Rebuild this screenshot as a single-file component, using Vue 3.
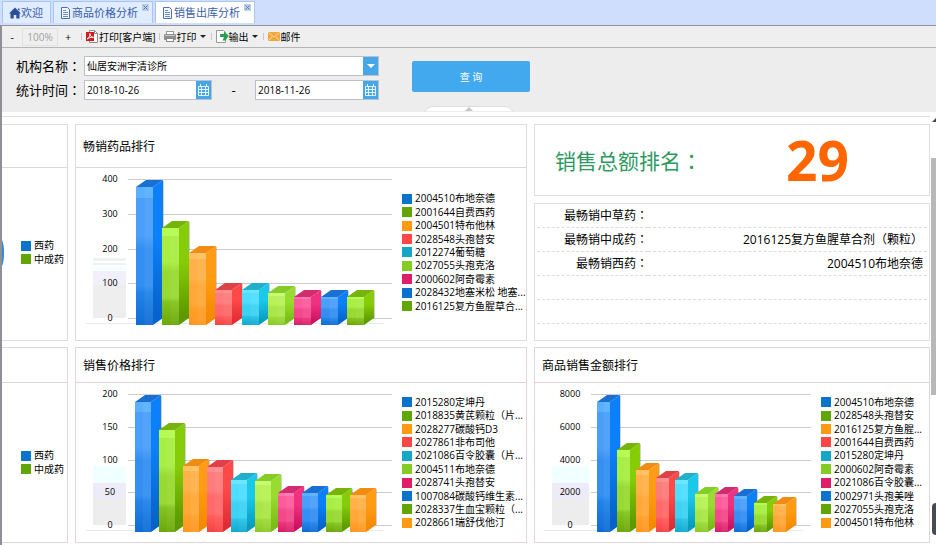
<template>
  <div class="page">
    <nav class="tabs">
      <a href="#" class="tab">
        <svg class="tab-icon" viewBox="0 0 12 12">
          <path d="M6 0.5 L12 6.5 H10.5 V11.5 H7.3 V8 H4.7 V11.5 H1.5 V6.5 H0 Z" fill="#2a4f9c" />
          <path d="M9 1.5 h1.5 v2.5 l-1.5 -1.5z" fill="#2a4f9c" />
        </svg>
        <span>欢迎</span>
      </a>
      <a v-for="tab in tabs" :key="tab.name" href="#" :class="['tab', 'closable', { active: tab.active }]">
        <svg class="tab-icon" viewBox="0 0 12 12">
          <path d="M1.5 0.5 h6 l2 2 v9 h-8z" fill="#f4f8ff" stroke="#4a6fb5" />
          <path d="M3 3.5 h3 M3 5.5 h5 M3 7.5 h5 M3 9.5 h5" stroke="#6a8cc8" />
        </svg>
        <span>{{ tab.name }}</span>
        <svg class="tab-close" viewBox="0 0 7 7">
          <rect width="7" height="7" rx="1" fill="#b9cdea" />
          <path d="M1.5 1.5 l4 4 M5.5 1.5 l-4 4" stroke="#5f7ba8" />
        </svg>
      </a>
    </nav>

    <div class="workspace">
      <div class="toolbar">
        <button class="tool zoom-btn">-</button>
        <input class="zoom-value" type="text" :value="zoom" aria-label="缩放" readonly />
        <button class="tool zoom-btn">+</button>
        <i class="sep"></i>
        <button class="tool">
          <svg class="tool-icon" viewBox="0 0 13 13">
            <path d="M3.5 0.5 h5 l3 3 v9 h-8z" fill="#fff" stroke="#8c8c8c" />
            <path d="M8.5 0.5 v3 h3" fill="none" stroke="#8c8c8c" />
            <rect x="0" y="2" width="8" height="9" fill="#cf1b22" />
            <path d="M1 9 C3.5 8 4.500 5 3.800 3.500 C4 6 5.500 7.500 7.500 7.300 C4.500 7 2.500 8 1 9" fill="none" stroke="#fff" />
          </svg>
          <span>打印[客户端]</span>
        </button>
        <i class="sep"></i>
        <button class="tool">
          <svg class="tool-icon" viewBox="0 0 13 13">
            <rect x="2.5" y="1.5" width="7" height="4" fill="#fff" stroke="#9a9a9a" />
            <rect x="0" y="4" width="12" height="6" rx="1" fill="#8d8f91" />
            <rect x="1" y="5" width="10" height="1" fill="#c5c7c9" />
            <rect x="2.5" y="8.5" width="7" height="3" fill="#fff" stroke="#888" />
          </svg>
          <span>打印</span>
          <i class="caret"></i>
        </button>
        <i class="sep"></i>
        <button class="tool">
          <svg class="tool-icon" viewBox="0 0 13 13">
            <path d="M0.5 0.5 h7 l2 2 v10 h-9z" fill="#fff" stroke="#999" />
            <path d="M4 4 H8 V1.5 L12.500 5.500 V6 L9.500 10.500 H6.500 L8 7 H4z" fill="#25a250" />
          </svg>
          <span>输出</span>
          <i class="caret"></i>
        </button>
        <i class="sep"></i>
        <button class="tool">
          <svg class="tool-icon" viewBox="0 0 13 13">
            <rect x="0" y="2" width="12" height="9" rx="1" fill="#f2a63c" />
            <path d="M0.500 2.500 L6 7 L11.500 2.500 M0.500 10.500 L4.500 6.500 M11.500 10.500 L7.500 6.500" fill="none" stroke="#fbdca4" />
          </svg>
          <span>邮件</span>
        </button>
      </div>

      <form class="query" @submit.prevent>
        <div class="fields">
          <div class="field-row">
            <label for="org">机构名称<span class="colon">：</span></label>
            <div class="box org-box">
              <select id="org" v-model="org">
                <option>仙居安洲宇清诊所</option>
              </select>
              <span class="box-btn"><i class="caret white"></i></span>
            </div>
          </div>
          <div class="field-row">
            <label for="start">统计时间<span class="colon">：</span></label>
            <div class="box date-box">
              <input id="start" v-model="startDate" type="text" />
              <button type="button" class="box-btn" aria-label="选择开始日期">
                <svg class="calendar" viewBox="0 0 11 12">
                  <path d="M0.500 2.500 h10 v9 h-10z M0.500 5.500 h10 M0.500 8.500 h10 M3.500 3 v8 M7.500 3 v8 M2.500 0 v3 M8.500 0 v3" fill="none" stroke="#e4f3ff" />
                </svg>
              </button>
            </div>
            <span class="dash">-</span>
            <div class="box end-box">
              <input id="end" v-model="endDate" type="text" aria-label="结束日期" />
              <button type="button" class="box-btn" aria-label="选择结束日期">
                <svg class="calendar" viewBox="0 0 11 12">
                  <path d="M0.500 2.500 h10 v9 h-10z M0.500 5.500 h10 M0.500 8.500 h10 M3.500 3 v8 M7.500 3 v8 M2.500 0 v3 M8.500 0 v3" fill="none" stroke="#e4f3ff" />
                </svg>
              </button>
            </div>
          </div>
        </div>
        <button class="submit">查 询</button>
        <svg class="handle" viewBox="0 0 90 6">
          <path d="M0 6 L5 1.500 Q7 0.500 10 0.500 H80 Q83 0.500 85 1.500 L90 6z" fill="#fff" stroke="#ddd" />
          <path d="M41 5 L45 1 L49 5z" fill="#c4c4c4" />
        </svg>
      </form>

      <div class="content">
        <main class="report">
          <div class="prev-row"></div>
          <div class="dashboard">
            <template v-for="row in rows" :key="row.key">
              <section :class="['panel', 'cut', row.key]">
                <h2></h2>
                <div class="panel-body pie-body">
                  <svg v-if="row.key === 'top'" class="pie" viewBox="0 0 2 26">
                    <path d="M0 0 Q2 4 2 13 Q2 22 0 26z" fill="#2a8ad8" />
                  </svg>
                  <ul class="legend" :style="{ height: legendHeight(2) }">
                    <li v-for="(name, i) in ['西药', '中成药']" :key="name">
                      <i :class="['swatch', palette[i].name]"></i>{{ name }}
                    </li>
                  </ul>
                </div>
              </section>

              <template v-for="chart in row.charts" :key="chart.title">
                <div v-if="chart.summary" class="stack">
                  <section class="panel total">
                    <span class="total-label">销售总额排名<span class="colon">：</span></span>
                    <strong>29</strong>
                  </section>
                  <section class="panel best">
                    <table>
                      <tbody>
                        <tr v-for="(item, i) in best" :key="i">
                          <th scope="row">{{ item[0] }}<span v-if="item[0]" class="colon">：</span></th>
                          <td>{{ item[1] }}</td>
                        </tr>
                      </tbody>
                    </table>
                  </section>
                </div>
                <section v-else :class="['panel', row.key]">
                  <h2>{{ chart.title }}</h2>
                  <div class="panel-body">
                    <svg :width="chart.right + 10" :height="chart.zero + 17" class="chart">
                      <defs>
                        <template v-for="c in palette" :key="c.name">
                          <linearGradient :id="`${chart.id}-${c.name}`" x2="0" y2="1">
                            <stop v-for="(s, i) in steps" :key="i" :offset="s[0]" :stop-color="c.front[s[1]]" />
                          </linearGradient>
                          <linearGradient :id="`${chart.id}-${c.name}-side`" x2="0" y2="1">
                            <stop offset="0" :stop-color="c.side[0]" />
                            <stop offset="0.4" :stop-color="c.side[0]" />
                            <stop offset="0.9" :stop-color="c.side[1]" />
                          </linearGradient>
                        </template>
                      </defs>
                      <rect
                        v-for="(w, i) in row.wall"
                        :key="i"
                        x="17"
                        :y="w[0]"
                        :width="chart.left - 19"
                        :height="w[1]"
                        :fill="w[2]"
                      />
                      <line :x1="chart.floor" :x2="chart.right - 8" :y1="chart.zero + 5.5" :y2="chart.zero + 5.5" stroke="#e6ecec" />
                      <g v-for="(tick, i) in chart.ticks" :key="tick">
                        <line :x1="chart.left" :x2="chart.right" :y1="tickY(chart, i)" :y2="tickY(chart, i)" stroke="#ccc" />
                        <text :x="chart.label" :y="tickY(chart, i) + 2" text-anchor="middle">{{ tick }}</text>
                      </g>
                      <g v-for="bar in bars(chart)" :key="bar.x">
                        <path :d="bar.shadow" fill="#000" fill-opacity="0.18" />
                        <path :d="bar.side" :fill="`url(#${chart.id}-${bar.color.name}-side)`" />
                        <path :d="bar.top" :fill="bar.color.top" />
                        <rect :x="bar.x" :y="bar.y" :width="chart.bar" :height="bar.h" :fill="`url(#${chart.id}-${bar.color.name})`" />
                        <rect :x="bar.x + chart.bar / 2" :y="bar.y" :width="chart.bar / 2" :height="bar.h" fill="#fff" fill-opacity="0.05" />
                      </g>
                    </svg>
                    <ul class="legend" :style="{ height: legendHeight(chart.items.length) }">
                      <li v-for="(item, i) in chart.items" :key="item[0]">
                        <i :class="['swatch', palette[i % 7].name]"></i>{{ item[0] }}
                      </li>
                    </ul>
                  </div>
                </section>
              </template>
            </template>
          </div>
        </main>
        <div class="scrollbar">
          <i class="scroll-up"></i>
          <i class="scroll-thumb"></i>
        </div>
      </div>
    </div>
    <div class="float-tool"></div>
  </div>
</template>

<script setup>
import { ref } from 'vue'

const zoom = ref('100%')
const org = ref('仙居安洲宇清诊所')
const startDate = ref('2018-10-26')
const endDate = ref('2018-11-26')

const tabs = [
  { name: '商品价格分析', active: false },
  { name: '销售出库分析', active: true },
]

const best = [
  ['最畅销中草药', ''],
  ['最畅销中成药', '2016125复方鱼腥草合剂（颗粒）'],
  ['最畅销西药', '2004510布地奈德'],
  ['', ''],
  ['', ''],
]

// 柱子正面渐变的分段：[位置, 颜色下标]
const steps = [
  [0, 0], [0.08, 0], [0.08, 1], [0.35, 1], [0.45, 2], [0.72, 2], [0.76, 3], [1, 4],
]

const palette = [
  { name: 'blue', top: '#1a70d2', front: ['#5ab0ff', '#4a9ffa', '#348ff2', '#2284ea', '#0f6cd6'], side: ['#0b80fa', '#0763cc'] },
  { name: 'green', top: '#76b40c', front: ['#b4fb52', '#a8ee44', '#98da32', '#84c41e', '#6aa80a'], side: ['#86cc08', '#5c9a00'] },
  { name: 'orange', top: '#f08c12', front: ['#ffc060', '#ffb24a', '#ffa838', '#ffa02c', '#ff9820'], side: ['#ff9c14', '#f58a00'] },
  { name: 'red', top: '#e04048', front: ['#ff8c8c', '#ff7c7c', '#ff6a6a', '#ff5a5a', '#f54444'], side: ['#ff4848', '#e02c34'] },
  { name: 'cyan', top: '#20b0cc', front: ['#66e6ff', '#50deff', '#3cd2f4', '#28c2e6', '#10aace'], side: ['#1cc8ea', '#069cc0'] },
  { name: 'lime', top: '#84cc28', front: ['#c6fa70', '#b8f258', '#aae648', '#9cda38', '#8cca28'], side: ['#98dc30', '#78bc14'] },
  { name: 'pink', top: '#d42a70', front: ['#ff74ac', '#fc5c9c', '#f4488c', '#ea347c', '#d8206a'], side: ['#f03080', '#c81460'] },
]

const wallTop = [
  [90, 3, '#edf3f3'],
  [95, 2, '#edf3f3'],
  [99, 3, '#f2ffff'],
  [103, 14, '#f1f0fa'],
  [117, 33, '#eeeeee'],
]
const wallBottom = [
  [83, 17, '#f0ffff'],
  [100, 16, '#edebf8'],
  [116, 26, '#ededed'],
]

const rows = [
  {
    key: 'top',
    wall: wallTop,
    charts: [
      {
        id: 'sales', title: '畅销药品排行', ticks: [400, 300, 200, 100, 0],
        left: 52, right: 316, label: 34, floor: 10, zero: 150, start: 60, pitch: 26.4, bar: 17,
        items: [
          ['2004510布地奈德', 398], ['2001644自费西药', 278], ['2004501特布他林', 206],
          ['2028548头孢替安', 100], ['2012274葡萄糖', 100], ['2027055头孢克洛', 92],
          ['2000602阿奇霉素', 80], ['2028432地塞米松 地塞...', 80], ['2016125复方鱼腥草合...', 80],
        ],
      },
      { title: 'summary', summary: true },
    ],
  },
  {
    key: 'bottom',
    wall: wallBottom,
    charts: [
      {
        id: 'price', title: '销售价格排行', ticks: [200, 150, 100, 50, 0],
        left: 52, right: 316, label: 34, floor: 10, zero: 142, start: 59, pitch: 23.9, bar: 16,
        items: [
          ['2015280定坤丹', 198], ['2018835黄芪颗粒（片...', 156], ['2028277碳酸钙D3', 101],
          ['2027861非布司他', 99], ['2021086百令胶囊（片...', 79], ['2004511布地奈德', 78],
          ['2028741头孢替安', 60], ['1007084碳酸钙维生素...', 60], ['2028337生血宝颗粒（...', 56],
          ['2028661瑞舒伐他汀', 57],
        ],
      },
      {
        id: 'amount', title: '商品销售金额排行', ticks: [8000, 6000, 4000, 2000, 0],
        left: 56, right: 276, label: 35, floor: 9, zero: 142, start: 62, pitch: 19.6, bar: 13,
        items: [
          ['2004510布地奈德', 7960], ['2028548头孢替安', 5000], ['2016125复方鱼腥...', 3800],
          ['2001644自费西药', 3300], ['2015280定坤丹', 3180], ['2000602阿奇霉素', 2320],
          ['2021086百令胶囊...', 2320], ['2002971头孢美唑', 2200], ['2027055头孢克洛', 1770],
          ['2004501特布他林', 1710],
        ],
      },
    ],
  },
]

const plotTop = 11

const tickY = (chart, i) => Math.round(plotTop + ((chart.zero - plotTop) * i) / 4) + 0.5

const legendHeight = (count) => Math.round(count * 13.4) + 'px'

// 立体柱：正面 + 顶面 + 右侧面
const bars = (chart) => {
  const dx = 10
  const dy = 7
  const bottom = chart.zero + 7
  return chart.items.map((item, i) => {
    const h = Math.round((item[1] / chart.ticks[0]) * (chart.zero - plotTop))
    const x = Math.round(chart.start + i * chart.pitch)
    const y = bottom - h
    const r = x + chart.bar
    return {
      x,
      y,
      h,
      color: palette[i % 7],
      top: `M${x} ${y} L${x + dx} ${y - dy} H${r + dx} L${r} ${y}z`,
      side: `M${r} ${y} L${r + dx} ${y - dy} V${bottom - dy} L${r} ${bottom}z`,
      shadow: `M${r + dx} ${y - dy + 1} h1 V${bottom - dy} h-1z`,
    }
  })
}
</script>

<style>
body {
  margin: 0;
  overflow: hidden;
}
</style>

<style scoped>
.page {
  position: relative;
  background: #fff;
  color: #000;
  font-family: "Open Sans", "Noto Sans CJK SC", sans-serif;
  font-size: 10px;
}

button,
input,
select {
  margin: 0;
  padding: 0;
  border: 0;
  background: none;
  color: inherit;
  font: inherit;
}

.colon {
  font-family: "Noto Sans CJK TC", sans-serif;
}

.tabs {
  display: flex;
  gap: 2px;
  height: 22px;
  padding: 1px 2px 2px;
  background: #cfdefc;
}

.tab {
  display: flex;
  align-items: center;
  box-sizing: border-box;
  padding: 0 7px 0 6px;
  border: 1px solid #a9c6f0;
  border-bottom: 0;
  background: #e0ecff;
  color: #3a5ea8;
  font-size: 11px;
  line-height: 16px;
  text-decoration: none;
}

.tab.active {
  background: #fff;
}

.tab.closable {
  padding-right: 3px;
}

.tab-icon {
  width: 12px;
  height: 12px;
}

.tab-close {
  align-self: flex-start;
  width: 7px;
  height: 7px;
  margin: 2px 0 0 4px;
}

.workspace {
  border-top: 1px solid #8f949c;
  border-left: 2px solid #8f9096;
}

.toolbar {
  display: flex;
  align-items: center;
  height: 21px;
  border-bottom: 1px solid #b5b5b5;
  background: #efefef;
}

.tool {
  display: flex;
  align-items: center;
  line-height: 16px;
}

.zoom-btn {
  justify-content: center;
  width: 20px;
}

.zoom-value {
  box-sizing: border-box;
  width: 36px;
  height: 18px;
  border: 1px solid #e2e2e2;
  color: #a2a2a2;
  text-align: center;
}

.sep {
  width: 1px;
  height: 7px;
  margin: 0 4px 0 3px;
  background: #c8c8c8;
}

.tool-icon {
  width: 13px;
  height: 13px;
}

.caret {
  margin: 0 2px 0 3px;
  border: 3px solid transparent;
  border-top-color: #222;
  border-bottom: 0;
}

.caret.white {
  margin: 0;
  border-width: 4px 4px 0;
  border-top-color: #fff;
}

.query {
  position: relative;
  display: flex;
  gap: 33px;
  padding: 8px 14px 12px;
  background: #ededed;
}

.fields {
  display: flex;
  flex-direction: column;
  gap: 4px;
}

.field-row {
  display: flex;
  align-items: center;
}

.field-row label {
  width: 68px;
  font-size: 13px;
  line-height: 20px;
  white-space: nowrap;
}

.box {
  display: flex;
  box-sizing: border-box;
  height: 20px;
  border: 1px solid #bcc0cc;
  background: #fff;
}

.box input,
.box select {
  flex: 1;
  min-width: 0;
  padding-left: 2px;
  appearance: none;
}

.org-box {
  width: 295px;
}

.date-box {
  width: 128px;
}

.end-box {
  width: 124px;
}

.dash {
  width: 43px;
  font-size: 13px;
  line-height: 20px;
  text-align: center;
}

.box-btn {
  display: flex;
  align-items: center;
  justify-content: center;
  width: 15px;
  background: #46a7e8;
}

.calendar {
  width: 11px;
  height: 12px;
}

.submit {
  width: 118px;
  height: 31px;
  margin-top: 5px;
  border-radius: 2px;
  background: #43a9ee;
  color: #fff;
}

.handle {
  position: absolute;
  bottom: 0;
  left: 50%;
  width: 90px;
  height: 6px;
  margin-left: -45px;
}

.content {
  display: flex;
}

.report {
  flex: 1;
  min-width: 0;
  padding: 4px 0 2px;
}

.prev-row {
  height: 0;
  margin-bottom: 7px;
  border-bottom: 1px solid #ddd;
}

.dashboard {
  display: grid;
  grid-template-columns: 66px minmax(0, 452fr) minmax(0, 396fr);
  gap: 6px 7px;
}

.panel {
  box-sizing: border-box;
  border: 1px solid #dedcde;
}

.panel.bottom {
  border-color: #e2d6d8;
}

.panel.cut {
  border-left: 0;
}

h2 {
  height: 42px;
  margin: 0;
  padding-left: 7px;
  border-bottom: 1px solid #dcd8da;
  font-size: 12px;
  font-weight: normal;
  line-height: 44px;
}

.bottom h2 {
  height: 34px;
  border-color: #e4d2d4;
  line-height: 36px;
}

.panel-body {
  display: flex;
  align-items: center;
  box-sizing: border-box;
  height: 172px;
  padding-bottom: 3px;
}

.bottom .panel-body {
  height: 159px;
  padding-bottom: 0;
}

.pie-body {
  position: relative;
  padding-left: 19px;
}

.pie {
  position: absolute;
  top: 72px;
  left: 0;
  width: 2px;
  height: 26px;
}

.chart {
  flex: none;
  align-self: flex-start;
}

.chart text {
  font-size: 9px;
}

.legend {
  display: flex;
  flex-direction: column;
  margin: 0;
  padding: 0;
  list-style: none;
  white-space: nowrap;
}

.legend li {
  display: flex;
  flex: 1;
  align-items: center;
  min-height: 0;
  line-height: 13px;
}

.swatch {
  width: 10px;
  height: 10px;
  margin-right: 3px;
}

.swatch.blue {
  background: #0a74cc;
}

.swatch.green {
  background: #62a606;
}

.swatch.orange {
  background: #ff9a12;
}

.swatch.red {
  background: #ff4646;
}

.swatch.cyan {
  background: #16a6c8;
}

.swatch.lime {
  background: #84cc22;
}

.swatch.pink {
  background: #e01e68;
}

.stack {
  display: flex;
  flex-direction: column;
  gap: 7px;
}

.total {
  display: flex;
  align-items: center;
  height: 72px;
  padding-left: 20px;
  color: #2e9a62;
  font-size: 21px;
}

.total-label {
  width: 231px;
}

.total strong {
  color: #ff6600;
  font-size: 55px;
  line-height: 70px;
}

.best {
  flex: 1;
  padding: 0 2px;
}

.best table {
  width: 100%;
  border-spacing: 0;
  font-size: 12px;
}

.best th,
.best td {
  box-sizing: border-box;
  height: 24px;
  padding: 0;
  border-bottom: 1px dashed #dcdcdc;
  font-weight: normal;
  line-height: 22px;
  text-align: right;
}

.best th {
  width: 111px;
}

.best td {
  padding-right: 4px;
}

.scrollbar {
  display: flex;
  flex-direction: column;
  align-items: flex-end;
  width: 6px;
  overflow: hidden;
}

.scroll-up {
  margin: 6px -4px 36px 0;
  border: 4px solid transparent;
  border-top: 0;
  border-bottom-color: #444;
}

.scroll-thumb {
  width: 5px;
  height: 237px;
  background: #b8b8b8;
}

.float-tool {
  position: absolute;
  right: 0;
  bottom: 10px;
  width: 4px;
  height: 32px;
  border-radius: 4px 0 0 4px;
  background: #454d52;
}
</style>
